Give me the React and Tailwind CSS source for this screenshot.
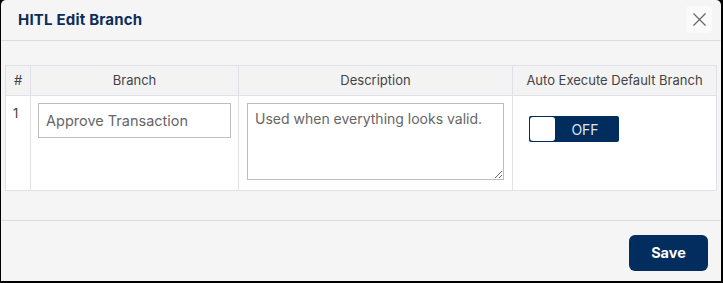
import { X } from "lucide-react";

const font = { fontFamily: "Inter, 'Open Sans', sans-serif" };

export default function App() {
  return (
    <div className="w-[723px] h-[283px] bg-black" style={font}>
      <div className="ml-px w-[720px] h-[281px] bg-[#f5f5f5] rounded-t-[5px] flex flex-col">
        {/* header */}
        <div className="h-[41px] border-b border-[#dcdcdc] flex items-center justify-between pl-[17px] pr-[9px]">
          <h2 className="text-[15px] font-bold tracking-[0.2px] text-[#0b2d5a]">HITL Edit Branch</h2>
          <button className="w-[26px] h-[27px] mt-[-1px] rounded bg-[#fafafa] flex items-center justify-center text-[#666]">
            <X size={23} strokeWidth={1.2} />
          </button>
        </div>

        {/* body */}
        <div className="h-[180px] border-b border-[#dcdcdc] pt-[24px] pl-[4px] pr-[3px]">
          <table className="w-[712px] border-collapse text-[13px] text-[#444]">
            <thead>
              <tr className="h-[30px] bg-[#f3f3f3]">
                <th className="w-[25px] border border-[#e0e0e6] font-normal">#</th>
                <th className="w-[208px] border border-[#e0e0e6] font-normal">Branch</th>
                <th className="w-[274px] border border-[#e0e0e6] font-normal">Description</th>
                <th className="border border-[#e0e0e6] font-normal">Auto Execute Default Branch</th>
              </tr>
            </thead>
            <tbody>
              <tr className="h-[95px] bg-white align-top">
                <td className="border border-[#e0e0e6] pl-[7px] pt-[8px]">1</td>
                <td className="border border-[#e0e0e6] pl-[7px] pt-[7px]">
                  <input
                    defaultValue="Approve Transaction"
                    className="w-[193px] h-[35px] border border-[#bdbdbd] px-[7px] text-[14.5px] text-[#666] bg-white outline-none"
                  />
                </td>
                <td className="border border-[#e0e0e6] pl-[8px] pt-[7px]">
                  <textarea
                    defaultValue="Used when everything looks valid."
                    className="block w-[257px] h-[77px] border border-[#bdbdbd] px-[7px] pt-[4px] text-[14px] text-[#666] bg-white outline-none"
                  />
                </td>
                <td className="border border-[#e0e0e6] pl-[16px] pt-[20px]">
                  <div className="w-[90px] h-[26px] rounded-[2px] bg-[#002d5e] flex items-center pl-px">
                    <span className="w-[25px] h-[24px] rounded-[3px] bg-white" />
                    <span className="flex-1 text-center text-[14px] text-[#dfe6ee] pr-[4px]">OFF</span>
                  </div>
                </td>
              </tr>
            </tbody>
          </table>
        </div>

        {/* footer */}
        <div className="flex-1 flex items-start justify-end pt-[14px] pr-[13px]">
          <button className="w-[79px] h-[36px] rounded-[6px] bg-[#022d5e] text-white font-bold text-[14.5px]">
            Save
          </button>
        </div>
      </div>
    </div>
  );
}
